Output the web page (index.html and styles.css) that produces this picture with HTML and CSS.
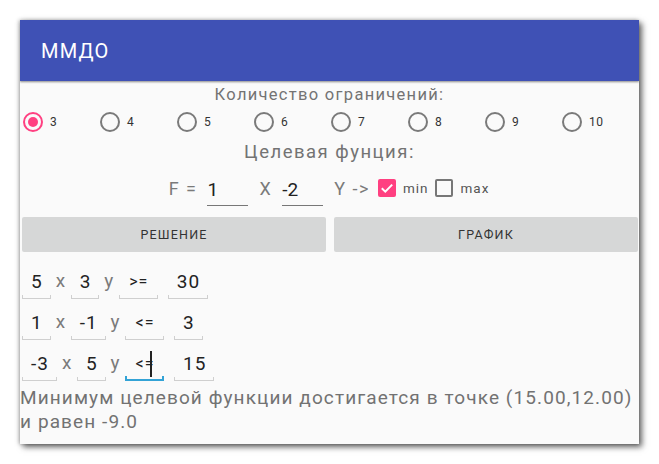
FILE: index.html
```html
<!DOCTYPE html>
<html lang="ru">
<head>
<meta charset="utf-8">
<title>ММДО</title>
<link rel="stylesheet" href="styles.css">
</head>
<body>
<div class="window">
  <header class="appbar">ММДО</header>
  <main class="content">
    <div class="count-label">Количество ограничений:</div>
    <div class="radios">
      <label class="radio checked"><span class="ring"></span><span class="rlabel">3</span></label>
      <label class="radio"><span class="ring"></span><span class="rlabel">4</span></label>
      <label class="radio"><span class="ring"></span><span class="rlabel">5</span></label>
      <label class="radio"><span class="ring"></span><span class="rlabel">6</span></label>
      <label class="radio"><span class="ring"></span><span class="rlabel">7</span></label>
      <label class="radio"><span class="ring"></span><span class="rlabel">8</span></label>
      <label class="radio"><span class="ring"></span><span class="rlabel">9</span></label>
      <label class="radio"><span class="ring"></span><span class="rlabel">10</span></label>
    </div>
    <div class="goal-label">Целевая фунция:</div>
    <div class="frow">
      <span class="flabel">F =</span>
      <span class="finput">1</span>
      <span class="flabel">X</span>
      <span class="finput">-2</span>
      <span class="flabel arrow">Y -&gt;</span>
      <span class="check checked">
        <svg viewBox="0 0 18 18" width="18" height="18"><rect x="0" y="0" width="18" height="18" rx="2" fill="#FF4081"/><path d="M3.8 9.2 L7.3 12.6 L14.2 5.6" fill="none" stroke="#fff" stroke-width="2"/></svg>
      </span>
      <span class="clabel">min</span>
      <span class="check"></span>
      <span class="clabel">max</span>
    </div>
    <div class="buttons">
      <button class="btn">РЕШЕНИЕ</button>
      <button class="btn">ГРАФИК</button>
    </div>
    <div class="rows">
      <div class="crow">
        <span class="cinput">5</span><span class="var">x</span>
        <span class="cinput">3</span><span class="var">y</span>
        <span class="cinput sign">&gt;=</span>
        <span class="cinput rhs">30</span>
      </div>
      <div class="crow">
        <span class="cinput">1</span><span class="var">x</span>
        <span class="cinput">-1</span><span class="var">y</span>
        <span class="cinput sign">&lt;=</span>
        <span class="cinput rhs">3</span>
      </div>
      <div class="crow">
        <span class="cinput">-3</span><span class="var">x</span>
        <span class="cinput">5</span><span class="var">y</span>
        <span class="cinput sign focused">&lt;=<span class="cursor"></span></span>
        <span class="cinput rhs">15</span>
      </div>
    </div>
    <p class="result">Минимум целевой функции достигается в точке (15.00,12.00) и равен -9.0</p>
  </main>
</div>
</body>
</html>
```

FILE: styles.css
```css
* { box-sizing: border-box; }
html, body { margin: 0; }
body {
  background: #ffffff;
  padding: 20px;
  font-family: Roboto, "Noto Sans", "DejaVu Sans", sans-serif;
}
.window {
  width: 619px;
  height: 424px;
  background: #FAFAFA;
  box-shadow: 3px 3px 6px rgba(0,0,0,0.6), -1px 0 4px rgba(0,0,0,0.3);
  overflow: hidden;
  display: flex;
  flex-direction: column;
}
.appbar {
  height: 61px;
  flex: none;
  background: #3F51B5;
  color: #ffffff;
  font-size: 20px;
  display: flex;
  align-items: center;
  padding-left: 21px;
  letter-spacing: 1.2px;
  box-shadow: 0 1px 2px rgba(0,0,0,0.45);
  position: relative;
  z-index: 1;
}
.content {
  display: flex;
  flex-direction: column;
}
.count-label {
  margin-top: 3px;
  height: 22px;
  line-height: 22px;
  text-align: center;
  color: #737373;
  font-size: 16.5px;
  letter-spacing: 1.3px;
}
.radios {
  height: 32px;
  display: grid;
  grid-template-columns: repeat(8, 77px);
  padding-left: 3px;
  align-items: center;
}
.radio {
  display: flex;
  align-items: center;
  gap: 7px;
}
.ring {
  width: 20px;
  height: 20px;
  border-radius: 50%;
  border: 2px solid #7a7a7a;
  display: flex;
  align-items: center;
  justify-content: center;
}
.radio.checked .ring { border-color: #FF4081; }
.radio.checked .ring::after {
  content: "";
  width: 10px;
  height: 10px;
  border-radius: 50%;
  background: #FF4081;
}
.rlabel {
  font-size: 12px;
  color: #333;
  letter-spacing: 0.6px;
}
.goal-label {
  height: 28px;
  line-height: 28px;
  text-align: center;
  color: #737373;
  font-size: 18.5px;
  letter-spacing: 1.5px;
}
.frow {
  height: 44px;
  display: flex;
  align-items: center;
  justify-content: center;
  padding-left: 6px;
}
.flabel {
  color: #7a7a7a;
  font-size: 18px;
  margin-right: 10px;
  letter-spacing: 1.5px;
}
.flabel.arrow { margin-right: 8px; }
.finput {
  width: 41px;
  height: 30px;
  line-height: 28px;
  border-bottom: 1.5px solid #777;
  font-size: 19px;
  color: #222;
  margin-right: 11px;
  margin-top: 6px;
}
.check {
  width: 18px;
  height: 18px;
  border: 2px solid #777;
  border-radius: 2px;
  margin-right: 7px;
  display: block;
}
.check.checked { border: none; }
.check svg { display: block; }
.clabel {
  font-size: 13.5px;
  color: #555;
  margin-right: 7px;
  letter-spacing: 1px;
}
.buttons {
  margin-top: 7px;
  display: grid;
  grid-template-columns: 304px 304px;
  gap: 8px;
  padding-left: 2px;
}
.btn {
  height: 35px;
  border: none;
  border-radius: 2px;
  background: #D6D7D7;
  color: #333;
  font-family: Roboto, sans-serif;
  font-size: 12.5px;
  font-weight: 400;
  letter-spacing: 1.2px;
  padding: 0;
}
.rows {
  margin-top: 8px;
  display: flex;
  flex-direction: column;
  padding-left: 2px;
}
.crow {
  height: 41px;
  display: flex;
  align-items: center;
  gap: 5px;
}
.cinput {
  position: relative;
  min-width: 28px;
  height: 28px;
  line-height: 28px;
  padding: 0 8px 0 9px;
  font-size: 19px;
  color: #222;
  letter-spacing: 1px;
  text-align: center;
  margin-top: 2px;
}
.cinput::after {
  content: "";
  position: absolute;
  left: 0;
  right: 0;
  bottom: -3px;
  height: 3px;
  border: 1px solid #cfcfcf;
  border-top: none;
}
.cinput.sign { min-width: 39px; font-size: 16px; }
.cinput.rhs { margin-left: 5px; }
.cinput.focused::after {
  border-color: #33A3D6;
  border-width: 2px;
}
.cursor {
  position: absolute;
  right: 12px;
  top: 1px;
  width: 2px;
  height: 26px;
  background: #222;
}
.var {
  font-size: 19px;
  color: #7a7a7a;
  letter-spacing: 0.5px;
}
.result {
  margin: 3px 0 0;
  font-size: 19px;
  line-height: 24px;
  color: #727272;
  letter-spacing: 1.1px;
}
```
